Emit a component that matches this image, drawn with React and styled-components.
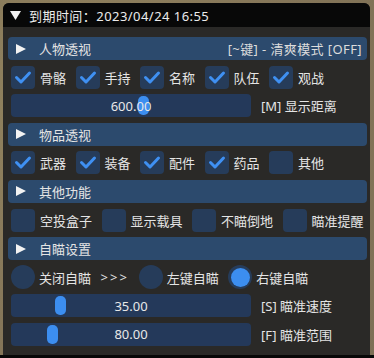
import React from 'react';
import styled, { createGlobalStyle } from 'styled-components';

const GlobalStyle = createGlobalStyle`
  html, body {
    margin: 0;
    padding: 0;
    background: #8a7b60;
  }
  body {
    font-family: "Noto Sans", "Noto Sans CJK SC", sans-serif;
    font-size: 13px;
    color: #e4e4e4;
  }
`;

const Page = styled.div`
  width: 374px;
  height: 358px;
  display: flex;
  flex-direction: column;
  background: radial-gradient(circle at 20% 30%, #93845f 0%, #857659 60%, #7d6f55 100%);
  overflow: hidden;
`;

const Window = styled.div`
  margin: 3px 4px 0 3px;
  height: 352px;
  display: flex;
  flex-direction: column;
  background: #2a2927;
  border-radius: 6px 6px 0 0;
  overflow: hidden;
`;

const BottomEdge = styled.div`
  flex: 1;
  background: #070707;
`;

const TitleBar = styled.div`
  height: 24px;
  flex-shrink: 0;
  display: flex;
  align-items: center;
  gap: 8px;
  padding-left: 7px;
  background: #080808;
  color: #ececec;
  white-space: nowrap;
  letter-spacing: 0.45px;
`;

const Body = styled.div`
  display: flex;
  flex-direction: column;
  gap: 5.6px;
  padding: 10px 3px 0 5px;
`;

const Header = styled.div`
  height: 23px;
  display: flex;
  align-items: center;
  padding: 0 5px 0 8px;
  background: #2c4a6d;
  border-radius: 4px;
  white-space: nowrap;
`;

const HeaderTitle = styled.span`
  margin-left: 12px;
  flex: 1;
`;

const HeaderNote = styled.span`
  color: #dcdcdc;
  letter-spacing: 0.4px;
`;

const Row = styled.div`
  height: 23px;
  display: flex;
  align-items: center;
  padding-left: 3px;
  white-space: nowrap;
`;

const Item = styled.div`
  display: flex;
  align-items: center;
  flex-shrink: 0;
  gap: ${p => p.$gap || 5}px;
  margin-right: 9.5px;
`;

const Box = styled.div`
  width: 24px;
  height: 23px;
  flex-shrink: 0;
  border-radius: 4px;
  background: #263c5a;
  display: flex;
  align-items: center;
  justify-content: center;
`;

const Radio = styled.div`
  width: 24px;
  height: 24px;
  flex-shrink: 0;
  border-radius: 50%;
  background: #263c5a;
  display: flex;
  align-items: center;
  justify-content: center;
`;

const RadioDot = styled.div`
  width: 19px;
  height: 19px;
  border-radius: 50%;
  background: #3c8ef0;
`;

const Arrows = styled.span`
  margin-right: 10px;
  letter-spacing: 2px;
`;

const SliderFrame = styled.div`
  position: relative;
  width: 240px;
  height: 23px;
  flex-shrink: 0;
  border-radius: 4px;
  background: #24395a;
  display: flex;
  align-items: center;
  justify-content: center;
  margin-right: 10px;
`;

const Grab = styled.div`
  position: absolute;
  top: 2px;
  width: 11px;
  height: 19px;
  border-radius: 5px;
  background: #3c8ef0;
`;

const SliderValue = styled.span`
  position: relative;
  color: #e8e8e8;
`;

const Triangle = ({ down }) => (
  <svg width="11" height="10" viewBox="0 0 11 10">
    {down ? (
      <polygon points="0,1 11,1 5.5,10" fill="#f2f2f2" />
    ) : (
      <polygon points="0,0 10,5 0,10" fill="#f2f2f2" />
    )}
  </svg>
);

const CheckMark = () => (
  <svg width="24" height="23" viewBox="0 0 24 23">
    <polyline
      points="5.5,11.5 10,16 18.5,7"
      fill="none"
      stroke="#3f90f2"
      strokeWidth="3"
      strokeLinecap="round"
      strokeLinejoin="round"
    />
  </svg>
);

const Check = ({ label, on }) => (
  <Item>
    <Box>{on && <CheckMark />}</Box>
    <span>{label}</span>
  </Item>
);

const RadioItem = ({ label, on }) => (
  <Item $gap={4}>
    <Radio>{on && <RadioDot />}</Radio>
    <span>{label}</span>
  </Item>
);

const Slider = ({ value, grab, label }) => (
  <Row>
    <SliderFrame>
      <Grab style={{ left: grab }} />
      <SliderValue>{value}</SliderValue>
    </SliderFrame>
    <span>{label}</span>
  </Row>
);

const Section = ({ title, note }) => (
  <Header>
    <Triangle />
    <HeaderTitle>{title}</HeaderTitle>
    {note && <HeaderNote>{note}</HeaderNote>}
  </Header>
);

export default function App() {
  return (
    <Page>
      <GlobalStyle />
      <Window>
        <TitleBar>
          <Triangle down />
          <span>到期时间：2023/04/24 16:55</span>
        </TitleBar>
        <Body>
          <Section title="人物透视" note="[~键] - 清爽模式 [OFF]" />
          <Row>
            {['骨骼', '手持', '名称', '队伍', '观战'].map(t => (
              <Check key={t} label={t} on />
            ))}
          </Row>
          <Slider value="600.00" grab={127} label="[M] 显示距离" />
          <Section title="物品透视" />
          <Row>
            <Check label="武器" on />
            <Check label="装备" on />
            <Check label="配件" on />
            <Check label="药品" on />
            <Check label="其他" />
          </Row>
          <Section title="其他功能" />
          <Row>
            {['空投盒子', '显示载具', '不瞄倒地', '瞄准提醒'].map(t => (
              <Check key={t} label={t} />
            ))}
          </Row>
          <Section title="自瞄设置" />
          <Row>
            <RadioItem label="关闭自瞄" />
            <Arrows>&gt;&gt;&gt;</Arrows>
            <RadioItem label="左键自瞄" />
            <RadioItem label="右键自瞄" on />
          </Row>
          <Slider value="35.00" grab={44} label="[S] 瞄准速度" />
          <Slider value="80.00" grab={36} label="[F] 瞄准范围" />
        </Body>
      </Window>
      <BottomEdge />
    </Page>
  );
}
